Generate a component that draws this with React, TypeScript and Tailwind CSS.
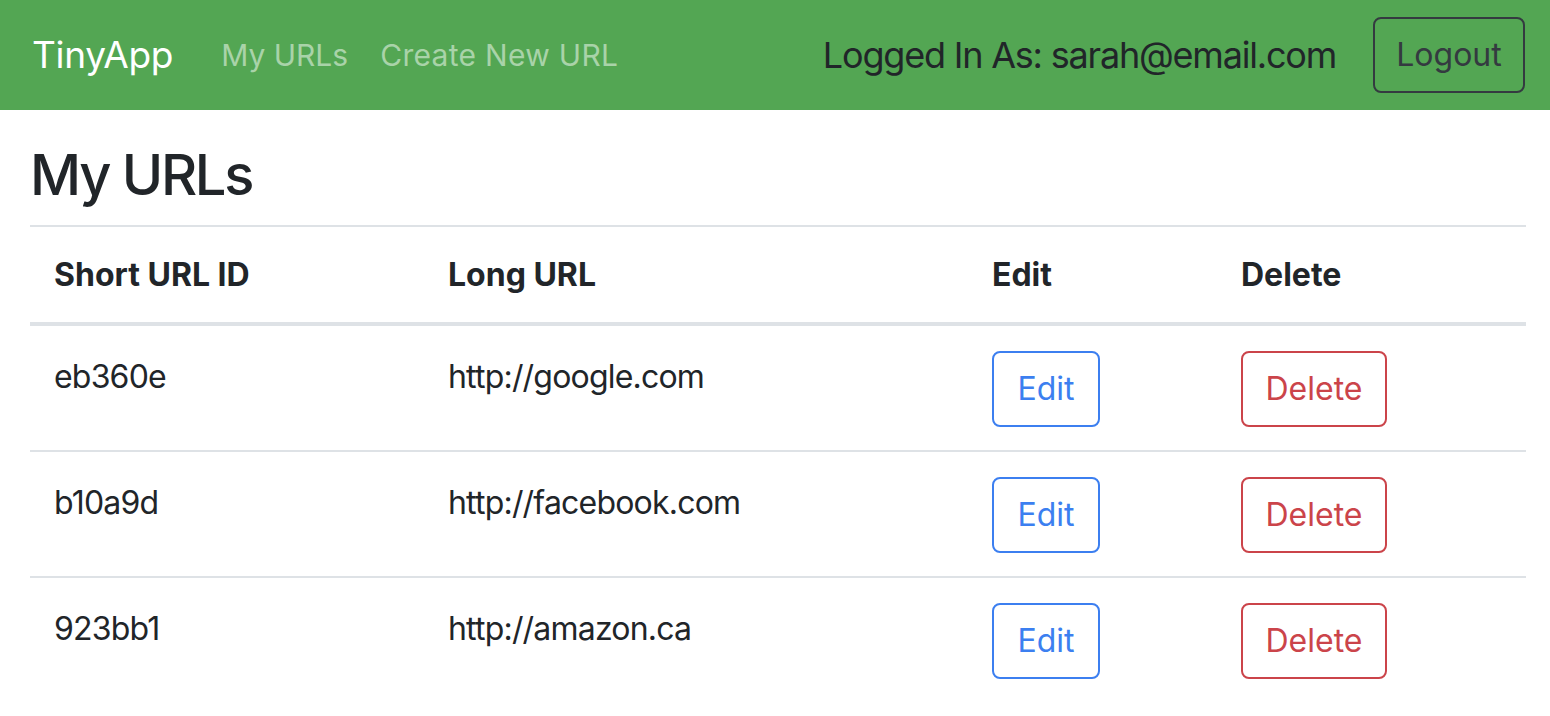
const rows = [
  { id: 'eb360e', url: 'http://google.com' },
  { id: 'b10a9d', url: 'http://facebook.com' },
  { id: '923bb1', url: 'http://amazon.ca' },
];

export default function App() {
  return (
    <div className="min-h-[716px] bg-white text-[#212529] font-['Inter','Roboto',sans-serif]">
      {/* Navbar */}
      <nav className="h-[110px] bg-[#53a653] flex items-center pl-[32px] pr-[25px]">
        <span className="text-[37px] text-white mr-[32px] leading-[60px] tracking-[-0.3px]">TinyApp</span>
        <a className="text-[30px] text-[#a9d3a9] px-[16px] leading-[48px]">My URLs</a>
        <a className="text-[30px] text-[#a9d3a9] px-[16px] leading-[48px] tracking-[0.3px]">Create New URL</a>
        <div className="ml-auto flex items-center">
          <span className="text-[36px] text-[#212529] mr-[37px] leading-[48px] tracking-[-1.2px]">Logged In As: sarah@email.com</span>
          <button className="h-[76px] w-[152px] border-2 border-[#343a40] rounded-[8px] text-[32px] text-[#343a40] leading-[48px]">
            Logout
          </button>
        </div>
      </nav>

      {/* Content */}
      <main className="pl-[30px] pr-[24px]">
        <h1 className="text-[56px] font-medium leading-[66px] tracking-[-2.3px] pt-[32px] pb-[17px]">My URLs</h1>
        <table className="w-full border-collapse text-[32px] leading-[48px]">
          <thead>
            <tr className="border-t-2 border-[#dee2e6] border-b-4">
              <th className="w-[394px] text-left font-bold px-[24px] pt-[24px] pb-[23px]">Short URL ID</th>
              <th className="w-[544px] text-left font-bold px-[24px] pt-[24px] pb-[23px]">Long URL</th>
              <th className="w-[249px] text-left font-bold px-[24px] pt-[24px] pb-[23px]">Edit</th>
              <th className="text-left font-bold px-[24px] pt-[24px] pb-[23px]">Delete</th>
            </tr>
          </thead>
          <tbody>
            {rows.map((r) => (
              <tr key={r.id} className="border-b-2 border-[#dee2e6] last:border-b-0">
                <td className="align-top px-[24px] pt-[27px] tracking-[-0.8px]">{r.id}</td>
                <td className="align-top px-[24px] pt-[27px] tracking-[-0.8px]">{r.url}</td>
                <td className="align-top px-[24px] pt-[25px] pb-[23px]">
                  <button className="h-[76px] w-[108px] border-2 border-[#3c7ff0] rounded-[8px] text-[#3c7ff0] text-[32px]">
                    Edit
                  </button>
                </td>
                <td className="align-top px-[24px] pt-[25px] pb-[23px]">
                  <button className="h-[76px] w-[146px] border-2 border-[#cb444a] rounded-[8px] text-[#cb444a] text-[32px]">
                    Delete
                  </button>
                </td>
              </tr>
            ))}
          </tbody>
        </table>
      </main>
    </div>
  );
}
